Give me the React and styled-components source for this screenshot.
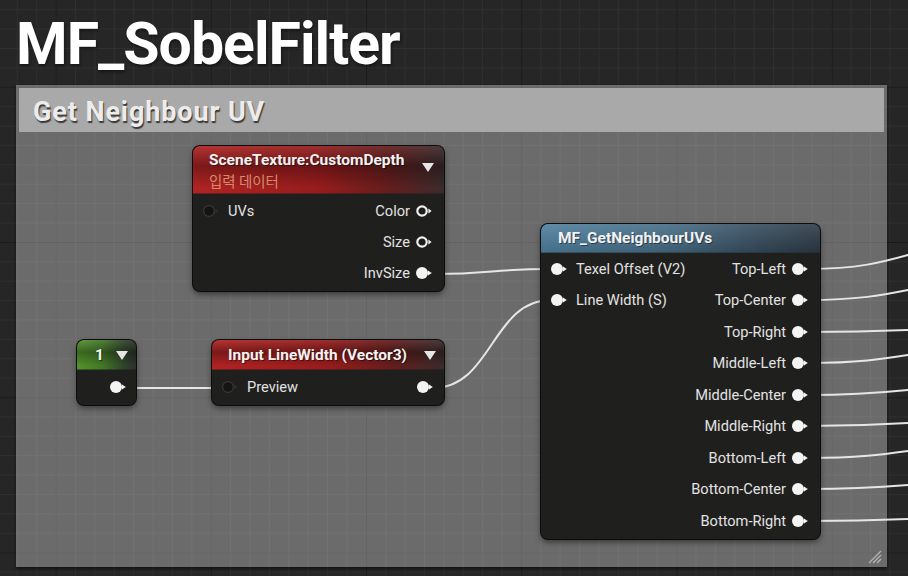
import React from 'react';
import styled, { createGlobalStyle } from 'styled-components';

const GlobalStyle = createGlobalStyle`
  html, body {
    margin: 0;
    padding: 0;
    background: #262626;
  }
  body {
    font-family: Roboto, "Noto Sans", "Noto Sans CJK KR", sans-serif;
  }
`;

const Canvas = styled.div`
  position: relative;
  width: 908px;
  height: 576px;
  overflow: hidden;
  background-color: #262626;
  background-image:
    linear-gradient(to right, #1b1b1b 1px, transparent 1px),
    linear-gradient(to bottom, #1b1b1b 1px, transparent 1px),
    linear-gradient(to right, #2f2f2f 1px, transparent 1px),
    linear-gradient(to bottom, #2f2f2f 1px, transparent 1px);
  background-size: 155.2px 155.2px, 155.2px 155.2px, 19.4px 19.4px, 19.4px 19.4px;
  background-position: 55.6px 0, 0 86.8px, 16.8px 0, 0 9.2px;
`;

const Title = styled.h1`
  margin: 0;
  padding: 14px 0 0 16px;
  font: 700 59px/59px Roboto, sans-serif;
  letter-spacing: -1px;
  color: #ffffff;
  text-shadow: 1px 2px 3px rgba(0, 0, 0, 0.45);
`;

const Comment = styled.section`
  position: relative;
  margin: 12px 0 0 16px;
  width: 871px;
  height: 482px;
  box-sizing: border-box;
  padding: 3px;
  background: rgba(255, 255, 255, 0.32);
  box-shadow: 0 2px 3px rgba(0, 0, 0, 0.55);
`;

const CommentHeader = styled.header`
  display: flex;
  align-items: center;
  height: 44px;
  box-sizing: border-box;
  padding: 3px 0 0 14px;
  background: #a9a9a9;
  font: 700 27px Roboto, sans-serif;
  letter-spacing: 0.9px;
  color: #ececec;
  text-shadow: 1px 2px 1px #3a3a3a;
`;

const Wires = styled.svg`
  position: absolute;
  left: 0;
  top: 0;
  width: 100%;
  height: 100%;
  overflow: visible;
  pointer-events: none;
`;

const Grip = styled.svg`
  position: absolute;
  right: 4px;
  bottom: 3px;
`;

const Node = styled.div`
  position: absolute;
  left: ${(p) => p.$x}px;
  top: ${(p) => p.$y}px;
  width: ${(p) => p.$w}px;
  background: #1f201e;
  border-radius: 7px;
  overflow: hidden;
  box-shadow: 0 0 0 1px #0c0c0c, 0 3px 6px rgba(0, 0, 0, 0.5);
`;

const tones = {
  red: `linear-gradient(180deg, rgba(255,255,255,0.08) 0%, rgba(0,0,0,0.3) 42%, rgba(0,0,0,0) 88%),
    linear-gradient(90deg, #b02323 0%, #961c1c 50%, #641d1d 78%, #3a2b2b 100%)`,
  green: `linear-gradient(180deg, rgba(255,255,255,0.08) 0%, rgba(0,0,0,0.28) 42%, rgba(0,0,0,0) 88%),
    linear-gradient(90deg, #52922c 0%, #427526 45%, #30452a 78%, #2a312a 100%)`,
  blue: `linear-gradient(180deg, rgba(255,255,255,0.1) 0%, rgba(0,0,0,0.12) 100%),
    linear-gradient(90deg, #4e7e9d 0%, #456c84 45%, #354b5c 78%, #2c3944 100%)`,
};

const NodeHeader = styled.div`
  display: flex;
  justify-content: space-between;
  align-items: ${(p) => (p.$top ? 'flex-start' : 'center')};
  height: ${(p) => p.$h}px;
  box-sizing: border-box;
  padding: ${(p) => p.$pad};
  background: ${(p) => tones[p.$tone]};
  border-bottom: 1px solid rgba(0, 0, 0, 0.4);
`;

const NodeTitle = styled.div`
  font-size: 15.5px;
  line-height: 17px;
  font-weight: 700;
  color: #f2f2f2;
  white-space: nowrap;
  text-shadow: 1px 1px 0 rgba(0, 0, 0, 0.45);
`;

const NodeSubtitle = styled.div`
  margin-top: 2px;
  font: 400 14.5px/20px "Noto Sans CJK KR", "Noto Sans", sans-serif;
  color: #d58a6c;
`;

const Caret = styled.span`
  flex: none;
  width: 0;
  height: 0;
  margin-top: ${(p) => p.$mt || 0}px;
  border-left: 6px solid transparent;
  border-right: 6px solid transparent;
  border-top: 9px solid #e6e6e6;
`;

const Body = styled.div`
  display: flex;
  justify-content: space-between;
  padding: ${(p) => p.$pt}px ${(p) => p.$pr}px ${(p) => p.$pb}px 10px;
`;

const Column = styled.div`
  display: flex;
  flex-direction: column;
`;

const Row = styled.div`
  display: flex;
  align-items: center;
  justify-content: ${(p) => (p.$in ? 'flex-start' : 'flex-end')};
  gap: ${(p) => (p.$in ? 9 : 6)}px;
  height: ${(p) => p.$h}px;
  font-size: 14.6px;
  color: #e2e2e2;
  white-space: nowrap;
`;

const PinIcon = styled.svg`
  flex: none;
  display: block;
`;

function Pin({ kind = 'filled' }) {
  if (kind === 'dark') {
    return (
      <PinIcon width="16" height="12" viewBox="0 0 16 12">
        <circle cx="6" cy="6" r="5.4" fill="#141414" stroke="#383838" strokeWidth="1.2" />
        <polygon points="12.4,3.6 15.6,6 12.4,8.4" fill="#2e2e2e" />
      </PinIcon>
    );
  }
  if (kind === 'hollow') {
    return (
      <PinIcon width="16" height="12" viewBox="0 0 16 12">
        <circle cx="6" cy="6" r="4.7" fill="#1e1e1e" stroke="#f0f0f0" strokeWidth="2.2" />
        <polygon points="12.4,3.6 15.6,6 12.4,8.4" fill="#f0f0f0" />
      </PinIcon>
    );
  }
  return (
    <PinIcon width="16" height="12" viewBox="0 0 16 12">
      <circle cx="6" cy="6" r="6" fill="#f4f4f4" />
      <polygon points="12,3.4 15.8,6 12,8.6" fill="#f4f4f4" />
    </PinIcon>
  );
}

const outputs = [
  'Top-Left',
  'Top-Center',
  'Top-Right',
  'Middle-Left',
  'Middle-Center',
  'Middle-Right',
  'Bottom-Left',
  'Bottom-Center',
  'Bottom-Right',
];

// wire end heights where they leave the picture
const outWires = [
  [269, 255],
  [300, 290],
  [332, 330],
  [363, 355],
  [395, 390],
  [426, 423],
  [458, 451],
  [489, 485],
  [521, 519],
];

function App() {
  return (
    <>
      <GlobalStyle />
      <Canvas>
        <Title>MF_SobelFilter</Title>
        <Comment>
          <CommentHeader>Get Neighbour UV</CommentHeader>

          <Wires>
            <g transform="translate(-16 -85)" fill="none" stroke="#e6e6e6" strokeWidth="2">
              <path d="M433,274 C492,274 492,269 551,269" />
              <path d="M126,388 L222,388" />
              <path d="M433,388 C492,388 492,300 551,300" />
              {outWires.map(([a, b]) => {
                const c = 2 * b - a;
                return <path key={a} d={`M808,${a} C908,${a} 908,${c} 1008,${c}`} />;
              })}
            </g>
          </Wires>

          <Node $x={177} $y={61} $w={251}>
            <NodeHeader $tone="red" $h={48} $pad="6px 10px 0 16px" $top>
              <div>
                <NodeTitle>SceneTexture:CustomDepth</NodeTitle>
                <NodeSubtitle>입력 데이터</NodeSubtitle>
              </div>
              <Caret $mt={11} />
            </NodeHeader>
            <Body $pt={1} $pr={12} $pb={3}>
              <Column>
                <Row $in $h={31}>
                  <Pin kind="dark" />
                  UVs
                </Row>
              </Column>
              <Column>
                <Row $h={31}>
                  Color
                  <Pin kind="hollow" />
                </Row>
                <Row $h={31}>
                  Size
                  <Pin kind="hollow" />
                </Row>
                <Row $h={31}>
                  InvSize
                  <Pin />
                </Row>
              </Column>
            </Body>
          </Node>

          <Node $x={61} $y={255} $w={59}>
            <NodeHeader $tone="green" $h={30} $pad="2px 8px 0 18px">
              <NodeTitle>1</NodeTitle>
              <Caret />
            </NodeHeader>
            <Body $pt={1} $pr={10} $pb={3}>
              <Column />
              <Column>
                <Row $h={31}>
                  <Pin />
                </Row>
              </Column>
            </Body>
          </Node>

          <Node $x={196} $y={255} $w={232}>
            <NodeHeader $tone="red" $h={30} $pad="2px 8px 0 16px">
              <NodeTitle>Input LineWidth (Vector3)</NodeTitle>
              <Caret />
            </NodeHeader>
            <Body $pt={1} $pr={11} $pb={3}>
              <Column>
                <Row $in $h={31}>
                  <Pin kind="dark" />
                  Preview
                </Row>
              </Column>
              <Column>
                <Row $h={31}>
                  <Pin />
                </Row>
              </Column>
            </Body>
          </Node>

          <Node $x={525} $y={139} $w={279}>
            <NodeHeader $tone="blue" $h={29} $pad="0 10px 0 17px">
              <NodeTitle>MF_GetNeighbourUVs</NodeTitle>
            </NodeHeader>
            <Body $pt={0} $pr={12} $pb={2}>
              <Column>
                <Row $in $h={31.5}>
                  <Pin />
                  Texel Offset (V2)
                </Row>
                <Row $in $h={31.5}>
                  <Pin />
                  Line Width (S)
                </Row>
              </Column>
              <Column>
                {outputs.map((name) => (
                  <Row key={name} $h={31.5}>
                    {name}
                    <Pin />
                  </Row>
                ))}
              </Column>
            </Body>
          </Node>

          <Grip width="16" height="14" viewBox="0 0 16 14">
            <g stroke="#b4b4b4" strokeWidth="1.2">
              <line x1="2" y1="13" x2="14" y2="1" />
              <line x1="6" y1="13" x2="14" y2="5" />
              <line x1="10" y1="13" x2="14" y2="9" />
            </g>
          </Grip>
        </Comment>
      </Canvas>
    </>
  );
}

export default App;
